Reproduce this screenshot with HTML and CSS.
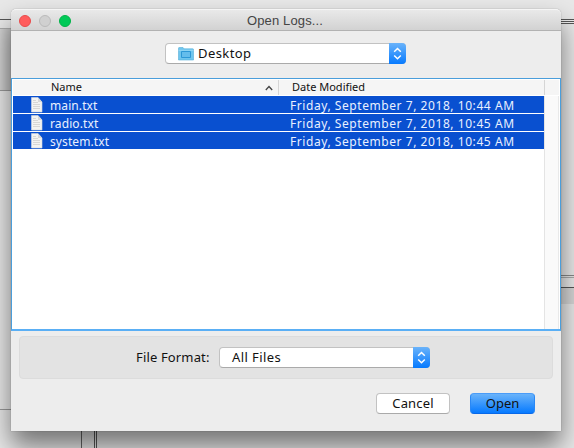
FILE: index.html
```html
<!DOCTYPE html>
<html lang="en">
<head>
<meta charset="utf-8">
<title>Open Logs...</title>
<link rel="stylesheet" href="styles.css">
</head>
<body>
<svg width="0" height="0" class="defs">
  <symbol id="doc" viewBox="0 0 12 16">
    <path d="M.5.5h6.500l4 4.500v10H.5z" fill="#f3f3f1" stroke="#d5d9df" stroke-width=".6"/>
    <path d="M7 .5v4.500h4z" fill="#d8d8d8"/>
    <path d="M2 3.500h3M2 5.500h5M2 7.500h7M2 9.500h7M2 11.500h7" stroke="#cfcfcf" stroke-width=".8"/>
  </symbol>
  <symbol id="updown" viewBox="0 0 17 21">
    <path d="M5.200 8.700l3.300-3.200 3.300 3.200M5.200 12.500l3.300 3.200 3.300-3.200" fill="none" stroke="#fff" stroke-width="1.500"/>
  </symbol>
</svg>
<main class="dialog">
  <header class="titlebar">
    <div class="lights"><i class="red"></i><i class="gray"></i><i class="green"></i></div>
    <h1><span>Open Logs...</span></h1>
  </header>
  <div class="location">
    <div class="select place">
      <svg class="folder" viewBox="0 0 16 14"><path d="M.5 13V1.200Q.5.5 1.200.5H5l1.200 1.300h8.600q.7 0 .7.700V13z" fill="#70c6ee" stroke="#55afd9" stroke-width=".6"/><path d="M.5 3.300h15" stroke="#a5e0f8" stroke-width=".7"/><path d="M3.500 4.500h9v6h-9z" fill="#64bdec" stroke="#2d98d6"/></svg>
      <span class="desktop">Desktop</span>
      <svg class="arrows"><use href="#updown"/></svg>
    </div>
  </div>
  <section class="files">
    <div class="head">
      <div class="name"><span>Name</span><svg class="sort" viewBox="0 0 8 6"><path d="M.8 5l3.200-3.500L7.200 5" fill="none" stroke="#444" stroke-width="1.300"/></svg></div>
      <div class="date"><span>Date Modified</span></div>
    </div>
    <div class="body">
      <div class="rows">
        <div class="row"><svg class="doc"><use href="#doc"/></svg><span class="file">main.txt</span><span class="stamp">Friday, September 7, 2018, 10:44 AM</span></div>
        <div class="row"><svg class="doc"><use href="#doc"/></svg><span class="file">radio.txt</span><span class="stamp">Friday, September 7, 2018, 10:45 AM</span></div>
        <div class="row"><svg class="doc"><use href="#doc"/></svg><span class="file">system.txt</span><span class="stamp">Friday, September 7, 2018, 10:45 AM</span></div>
      </div>
      <div class="track"></div>
    </div>
  </section>
  <div class="format">
    <label><span>File Format:</span></label>
    <div class="select type"><span class="all">All Files</span><svg class="arrows"><use href="#updown"/></svg></div>
  </div>
  <footer class="actions">
    <button class="cancel"><span>Cancel</span></button>
    <button class="open"><span>Open</span></button>
  </footer>
</main>
</body>
</html>
```
FILE: styles.css
```css
* { box-sizing: border-box; }
html, body { height: 100%; }
body {
  margin: 0;
  padding: 9px 13px 17px 11px;
  overflow: hidden;
  font: 12px/18px "Noto Sans", "Open Sans", sans-serif;
  color: #111;
  background-color: #e8e8e8;
  background-image:
    linear-gradient(#555, #555), linear-gradient(#aaa, #aaa), linear-gradient(#999, #999), linear-gradient(#999, #999),
    repeating-linear-gradient(#555 0 1px, #eee 1px 2px),
    linear-gradient(#888, #888), linear-gradient(#aaa, #aaa), linear-gradient(#555, #555), linear-gradient(#d5d5d5, #d5d5d5),
    linear-gradient(#666, #666), linear-gradient(#555, #555), linear-gradient(#555, #555),
    linear-gradient(90deg, #d2d2d2, #bcbcbc);
  background-size: 11px 1px, 11px 1px, 11px 1px, 11px 1px, 14px 5px, 14px 1px, 14px 1px, 14px 1px, 14px 16px, 1px 18px, 1px 18px, 1px 18px, 11px 61px;
  background-position: 0 19px, 0 28px, 0 90px, 0 409px, 561px 19px, 561px 275px, 561px 277px, 561px 287px, 561px 288px, 81px 430px, 94px 430px, 96px 430px, 0 29px;
  background-repeat: no-repeat;
}
.defs { display: block; height: 0; }
span { white-space: nowrap; }
svg { flex: none; }
.dialog {
  display: flex;
  flex-direction: column;
  height: 422px;
  background: #ededed;
  border-radius: 5px 5px 0 0;
  box-shadow: 0 0 1px rgba(0,0,0,.5), 0 15px 26px rgba(0,0,0,.5);
}
.titlebar {
  display: grid;
  grid-template-columns: 75px 1fr 75px;
  align-items: center;
  height: 22px;
  border-bottom: 1px solid #b2b2b2;
  border-top: 1px solid #f5f5f5;
  border-radius: 5px 5px 0 0;
  background: linear-gradient(#e9e9e9, #d2d2d2);
}
.lights { display: flex; gap: 8px; padding-left: 8px; }
.lights i { width: 12px; height: 12px; border-radius: 50%; border: 1px solid; }
.lights .red { background: #ff5c5c; border-color: #e84b4b; }
.lights .gray { background: #d0d0d0; border-color: #bababa; }
.lights .green { background: #00c957; border-color: #00b348; }
h1 { margin: 0; padding-top: 1px; font: 13px/20px "Liberation Sans", sans-serif; letter-spacing: .15px; color: #444; text-align: center; }
h1 span { margin-right: 2px; }
.location { height: 47px; padding: 12px 0 0 154px; }
.select {
  display: flex;
  align-items: center;
  height: 21px;
  border: 1px solid #c2c2c2;
  border-bottom-color: #aaa;
  border-radius: 4px;
  background: #fff;
  font-size: 13px;
}
.select span { padding-bottom: 2px; }
.desktop { letter-spacing: .42px; }
.place { width: 241px; padding-left: 12px; }
.folder { width: 16px; height: 14px; margin-right: 4px; }
.arrows {
  width: 17px;
  height: 21px;
  margin: -1px -1px -1px auto;
  border-radius: 0 4px 4px 0;
  background: linear-gradient(#6ab3fa, #067aff);
}
.files {
  display: flex;
  flex-direction: column;
  height: 253px;
  border: 1px solid #4a9edb;
  border-bottom: 2px solid #5aaff5;
  padding: 1px 1px 0;
  background: #fff;
}
.head { display: flex; height: 15px; margin-bottom: 1px; background: #f5f5f5; line-height: 15px; font-size: 11px; }
.head span { padding-bottom: 2px; line-height: 13px; }
.name { display: flex; justify-content: space-between; align-items: center; width: 266px; padding: 0 5px 0 38px; border-right: 1px solid #d5d5d5; }
.sort { width: 8px; height: 6px; }
.date { display: flex; align-items: center; width: 266px; padding-left: 13px; border-right: 1px solid #d5d5d5; }
.body { display: flex; flex: 1; }
.rows { flex: 1; }
.row {
  display: flex;
  align-items: center;
  height: 17px;
  margin-bottom: 1px;
  padding-left: 18px;
  background: #0950d0;
  color: #e9f0ff;
}
.row span { padding-top: 2px; }
.doc { width: 12px; height: 16px; margin-right: 7px; }
.file { width: 240px; letter-spacing: .1px; }
.stamp { letter-spacing: .56px; }
.track { width: 15px; border-left: 1px solid #e4e4e4; border-right: 1px solid #e9e9e9; background: #fafafa; }
.format {
  display: flex;
  height: 43px;
  margin: 5px 8px 0;
  padding-top: 10px;
  border: 1px solid #dcdcdc;
  border-radius: 4px;
  background: #e3e3e3;
}
label { width: 199px; padding-left: 116px; font-size: 13px; line-height: 20px; letter-spacing: .15px; }
.type { width: 211px; padding-left: 12px; }
.all { letter-spacing: .42px; }
.actions { display: flex; gap: 20px; justify-content: flex-end; padding: 14px 26px 0 0; }
button {
  display: flex;
  justify-content: center;
  align-items: center;
  height: 21px;
  padding: 0 0 2px;
  border: 1px solid #c2c2c2;
  border-bottom-color: #aaa;
  border-radius: 4px;
  background: #fff;
  font: 13px/18px "Noto Sans", sans-serif;
  color: #111;
}
.cancel { width: 74px; letter-spacing: .15px; }
.open { width: 65px; border-color: #4a9cf8 #2a88f5 #0868e8; background: linear-gradient(#6ab3fa, #067aff); }
```
